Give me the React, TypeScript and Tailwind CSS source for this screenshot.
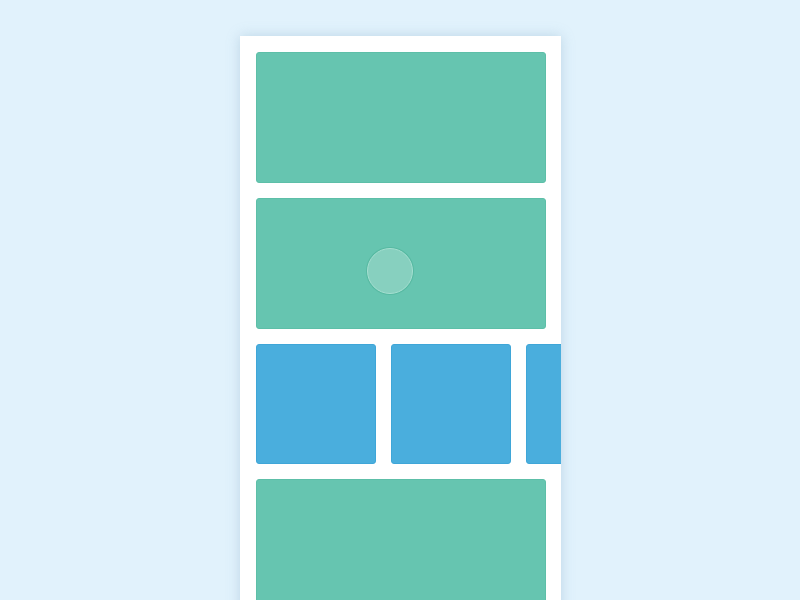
import React from 'react';

const GreenCard: React.FC<{ children?: React.ReactNode }> = ({ children }) => (
  <div className="relative h-[131px] w-[290px] shrink-0 rounded-[3px] border border-[#5dbfa8] bg-[#66c5b0]">{children}</div>
);

const BlueSquare: React.FC = () => (
  <div className="h-[120px] w-[120px] shrink-0 rounded-[3px] border border-[#3fa6d8] bg-[#4aaedd]" />
);

export default function App() {
  return (
    <div className="flex h-[600px] w-[800px] justify-center overflow-hidden bg-[#e1f2fc] pt-[36px]">
      <div className="flex h-[600px] w-[321px] flex-col gap-[15px] overflow-hidden bg-white pl-[16px] pt-[16px] shadow-[0_0_12px_rgba(120,160,190,0.35)]">
        <GreenCard />
        <GreenCard>
          <div className="absolute left-[110px] top-[49px] h-[46px] w-[46px] rounded-full border border-[#a6e0d2] bg-[#87d0bf] shadow-[0_0_0_1px_rgba(80,180,155,0.7)]" />
        </GreenCard>
        <div className="flex gap-[15px]">
          <BlueSquare />
          <BlueSquare />
          <BlueSquare />
        </div>
        <GreenCard />
      </div>
    </div>
  );
}
